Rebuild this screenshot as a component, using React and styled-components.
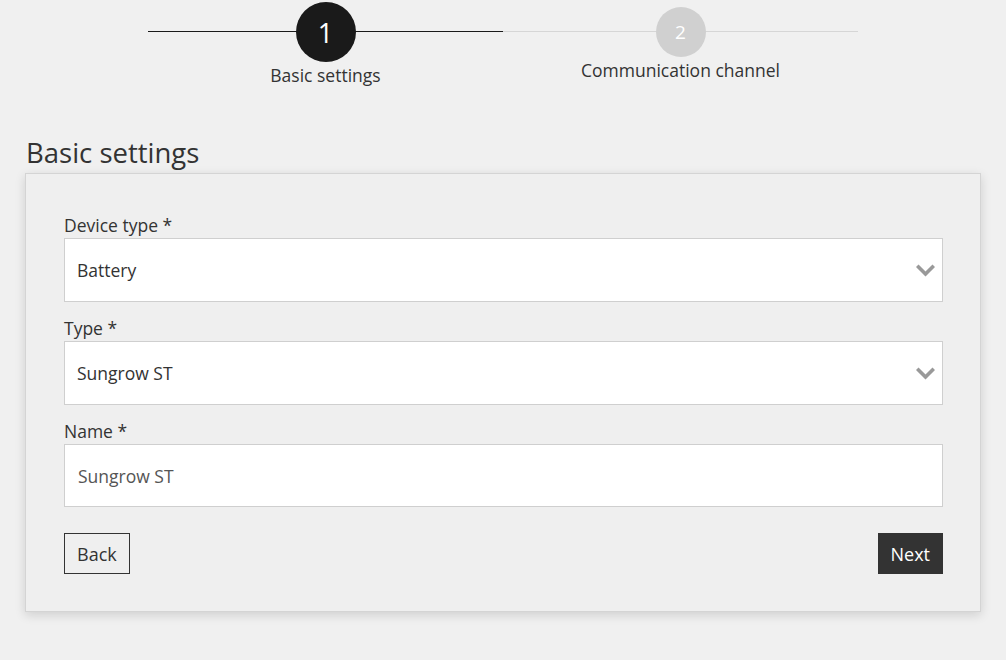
import React from 'react';
import styled, { createGlobalStyle } from 'styled-components';

const GlobalStyle = createGlobalStyle`
  html, body {
    margin: 0;
    padding: 0;
    background: #f0f0f0;
    font-family: 'Open Sans', 'Noto Sans', sans-serif;
    color: #333;
  }
`;

const Page = styled.div`
  width: 1006px;
  min-height: 660px;
  padding: 0 25px 40px 25px;
  box-sizing: border-box;
`;

const Stepper = styled.div`
  display: flex;
  justify-content: center;
  width: 710px;
  margin: 0 auto;
`;

const Step = styled.div`
  position: relative;
  flex: 1;
  display: flex;
  flex-direction: column;
  align-items: center;

  /* connector line behind the circle */
  &::before {
    content: '';
    position: absolute;
    left: 0;
    right: 0;
    top: 31px;
    height: 1px;
    background: ${(p) => (p.active ? '#1a1a1a' : '#d6d6d6')};
  }
`;

const Circle = styled.div`
  position: relative;
  z-index: 1;
  width: ${(p) => p.size}px;
  height: ${(p) => p.size}px;
  margin-top: ${(p) => (64 - p.size) / 2}px;
  border-radius: 50%;
  background: ${(p) => (p.active ? '#1a1a1a' : '#d0d0d0')};
  color: #fff;
  display: flex;
  align-items: center;
  justify-content: center;
  font-size: ${(p) => (p.active ? '27px' : '19px')};
`;

const StepLabel = styled.div`
  margin-top: 2px;
  font-size: 17.5px;
  line-height: 22px;
  color: #333;
`;

const Heading = styled.h2`
  margin: 49px 0 0 1px;
  font-size: 27.5px;
  font-weight: 400;
  line-height: 35px;
  color: #333;
`;

const Card = styled.div`
  margin-top: 3px;
  background: #efefef;
  border: 1px solid #d4d4d4;
  box-shadow: 0 3px 10px rgba(0, 0, 0, 0.14);
  padding: 39px 37px 37px 38px;
`;

const Field = styled.div`
  display: flex;
  flex-direction: column;
  margin-bottom: 14px;
`;

const Label = styled.label`
  font-size: 17.5px;
  line-height: 24px;
  margin-bottom: 1px;
  color: #333;
`;

const SelectBox = styled.div`
  height: 64px;
  box-sizing: border-box;
  background: #fff;
  border: 1px solid #cfcfcf;
  display: flex;
  align-items: center;
  justify-content: space-between;
  padding: 0 7px 0 12px;
  font-size: 17.5px;
  color: #333;
  cursor: pointer;
`;

const TextInput = styled.input`
  height: 63px;
  box-sizing: border-box;
  background: #fff;
  border: 1px solid #cfcfcf;
  padding: 0 13px;
  font-family: inherit;
  font-size: 17.5px;
  color: #555;
  outline: none;
`;

const Actions = styled.div`
  display: flex;
  justify-content: space-between;
  margin-top: 26px;
`;

const Button = styled.button`
  height: 41px;
  padding: 0 12px;
  font-family: inherit;
  font-size: 18px;
  border: 1px solid #333;
  background: ${(p) => (p.primary ? '#333' : 'transparent')};
  color: ${(p) => (p.primary ? '#fff' : '#333')};
  cursor: pointer;
`;

const Chevron = () => (
  <svg width="19" height="13" viewBox="0 0 19 13">
    <path d="M2.5 3 L9.5 10 L16.5 3" fill="none" stroke="#999" strokeWidth="3.6" strokeLinecap="square" />
  </svg>
);

const SelectField = ({ label, value }) => (
  <Field>
    <Label>{label}</Label>
    <SelectBox>
      <span>{value}</span>
      <Chevron />
    </SelectBox>
  </Field>
);

const steps = [
  { n: 1, label: 'Basic settings', active: true },
  { n: 2, label: 'Communication channel', active: false },
];

export default function App() {
  return (
    <>
      <GlobalStyle />
      <Page>
        <Stepper>
          {steps.map((s) => (
            <Step key={s.n} active={s.active}>
              <Circle active={s.active} size={s.active ? 60 : 50}>
                {s.n}
              </Circle>
              <StepLabel>{s.label}</StepLabel>
            </Step>
          ))}
        </Stepper>

        <Heading>Basic settings</Heading>
        <Card>
          <SelectField label="Device type *" value="Battery" />
          <SelectField label="Type *" value="Sungrow ST" />
          <Field>
            <Label>Name *</Label>
            <TextInput defaultValue="Sungrow ST" />
          </Field>
          <Actions>
            <Button>Back</Button>
            <Button primary>Next</Button>
          </Actions>
        </Card>
      </Page>
    </>
  );
}
